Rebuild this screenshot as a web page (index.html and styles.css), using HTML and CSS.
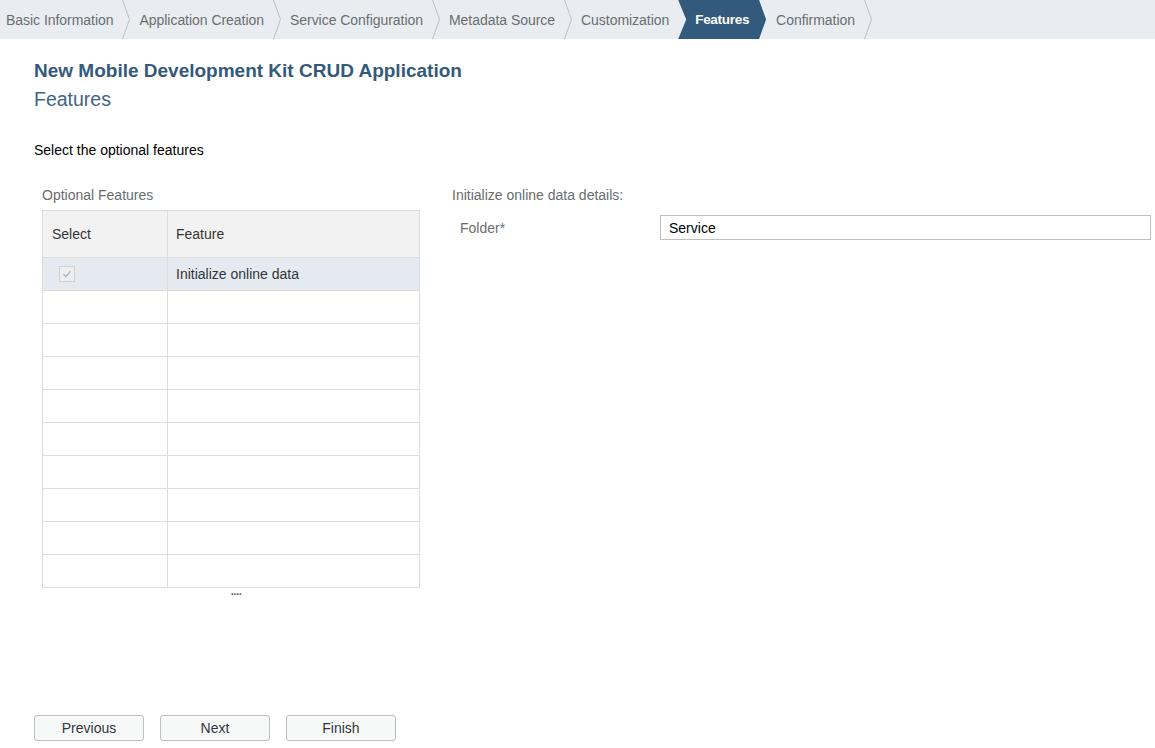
FILE: index.html
```html
<!DOCTYPE html>
<html lang="en">
<head>
<meta charset="utf-8">
<title>New Mobile Development Kit CRUD Application</title>
<link rel="stylesheet" href="styles.css">
</head>
<body>
<nav class="steps">
  <div class="step step-first">Basic Information</div>
  <svg class="sep" width="8" height="39" viewBox="0 0 8 39"><polyline points="0.5,0 7.5,19.5 0.5,39" fill="none" stroke="#bdbfc2" stroke-width="1"/></svg>
  <div class="step">Application Creation</div>
  <svg class="sep" width="8" height="39" viewBox="0 0 8 39"><polyline points="0.5,0 7.5,19.5 0.5,39" fill="none" stroke="#bdbfc2" stroke-width="1"/></svg>
  <div class="step">Service Configuration</div>
  <svg class="sep" width="8" height="39" viewBox="0 0 8 39"><polyline points="0.5,0 7.5,19.5 0.5,39" fill="none" stroke="#bdbfc2" stroke-width="1"/></svg>
  <div class="step">Metadata Source</div>
  <svg class="sep" width="8" height="39" viewBox="0 0 8 39"><polyline points="0.5,0 7.5,19.5 0.5,39" fill="none" stroke="#bdbfc2" stroke-width="1"/></svg>
  <div class="step">Customization</div>
  <div class="step step-active">Features</div>
  <div class="step step-after">Confirmation</div>
  <svg class="sep" width="8" height="39" viewBox="0 0 8 39"><polyline points="0.5,0 7.5,19.5 0.5,39" fill="none" stroke="#bdbfc2" stroke-width="1"/></svg>
</nav>

<main class="content">
  <h1 class="title">New Mobile Development Kit CRUD Application</h1>
  <h2 class="subtitle">Features</h2>
  <p class="intro">Select the optional features</p>

  <div class="columns">
    <section class="left">
      <div class="label">Optional Features</div>
      <table class="grid">
        <thead>
          <tr><th class="c-select">Select</th><th>Feature</th></tr>
        </thead>
        <tbody>
          <tr class="selected">
            <td class="c-select"><span class="checkbox"><svg width="10" height="10" viewBox="0 0 10 10"><polyline points="1.5,5.2 4,7.6 8.6,2.2" fill="none" stroke="#9fb1c4" stroke-width="1.2"/></svg></span></td>
            <td>Initialize online data</td>
          </tr>
          <tr><td class="c-select"></td><td></td></tr>
          <tr><td class="c-select"></td><td></td></tr>
          <tr><td class="c-select"></td><td></td></tr>
          <tr><td class="c-select"></td><td></td></tr>
          <tr><td class="c-select"></td><td></td></tr>
          <tr><td class="c-select"></td><td></td></tr>
          <tr><td class="c-select"></td><td></td></tr>
          <tr><td class="c-select"></td><td></td></tr>
          <tr><td class="c-select"></td><td></td></tr>
        </tbody>
      </table>
      <div class="more">....</div>
    </section>

    <section class="right">
      <div class="label">Initialize online data details:</div>
      <div class="field">
        <label class="field-label" for="folder">Folder*</label>
        <input id="folder" class="input" type="text" value="Service">
      </div>
    </section>
  </div>
</main>

<footer class="actions">
  <button class="btn">Previous</button>
  <button class="btn">Next</button>
  <button class="btn">Finish</button>
</footer>
</body>
</html>
```

FILE: styles.css
```css
html, body {
  margin: 0;
  padding: 0;
}
body {
  width: 1155px;
  height: 748px;
  background: #ffffff;
  font-family: "Liberation Sans", Arial, sans-serif;
  color: #32363a;
  position: relative;
  overflow: hidden;
}

/* Step bar */
.steps {
  display: flex;
  align-items: stretch;
  height: 39px;
  background: #e9edf1;
}
.step {
  display: flex;
  align-items: center;
  padding: 0 9px;
  font-size: 14px;
  letter-spacing: -0.04px;
  color: #6a6d70;
  white-space: nowrap;
}
.step-first {
  padding-left: 6px;
}
.sep {
  display: block;
  flex: none;
}
.step-active {
  background: #325a7c;
  color: #ffffff;
  font-weight: bold;
  font-size: 13.5px;
  letter-spacing: -0.3px;
  padding: 0 17px 0 17px;
  clip-path: polygon(0 0, calc(100% - 7px) 0, 100% 50%, calc(100% - 7px) 100%, 0 100%, 8px 50%);
}
.step-after {
  padding-left: 10px;
}

/* Content */
.content {
  padding: 0 4px 0 34px;
}
.title {
  margin: 0;
  padding-top: 21px;
  font-size: 19px;
  line-height: 22px;
  font-weight: bold;
  color: #34597b;
}
.subtitle {
  margin: 0;
  padding-top: 6px;
  font-size: 19.5px;
  line-height: 22px;
  font-weight: normal;
  color: #3e6486;
}
.intro {
  margin: 0;
  padding-top: 32px;
  font-size: 14px;
  line-height: 16px;
  color: #000000;
}
.columns {
  display: flex;
  gap: 32px;
  padding-top: 29px;
  padding-left: 8px;
}
.left {
  width: 378px;
  flex: none;
}
.right {
  flex: 1;
}
.label {
  font-size: 14px;
  line-height: 16px;
  color: #6a6d70;
  margin-bottom: 7px;
}

/* Table */
.grid {
  border-collapse: collapse;
  width: 378px;
  table-layout: fixed;
  font-size: 14px;
  color: #32363a;
}
.grid th,
.grid td {
  border: 1px solid #dddddd;
  text-align: left;
  padding: 0 0 0 8px;
}
.grid th {
  background: #f2f2f2;
  font-weight: normal;
  height: 46px;
  color: #32363a;
}
.grid td {
  height: 32px;
  background: #ffffff;
}
.grid .c-select {
  width: 115px;
}
.grid th.c-select {
  padding-left: 9px;
}
.grid tr.selected td {
  background: #e5eaf0;
}
.grid td.c-select {
  padding-left: 16px;
}
.checkbox {
  display: flex;
  align-items: center;
  justify-content: center;
  width: 14px;
  height: 14px;
  border: 1px solid #cdcfd2;
  background: #eeeeee;
}
.more {
  text-align: center;
  padding-left: 10px;
  font-size: 11px;
  font-weight: bold;
  letter-spacing: -0.4px;
  line-height: 6px;
  color: #555555;
}

/* Right form */
.field {
  display: flex;
  align-items: center;
  padding-top: 5px;
}
.field-label {
  width: 200px;
  flex: none;
  padding-left: 8px;
  font-size: 14px;
  color: #6a6d70;
}
.input {
  flex: 1;
  height: 25px;
  box-sizing: border-box;
  border: 1px solid #bfbfbf;
  border-radius: 0;
  padding: 0 8px;
  font-family: "Liberation Sans", Arial, sans-serif;
  font-size: 14px;
  color: #000000;
  background: #ffffff;
  margin: 0;
}

/* Footer */
.actions {
  position: absolute;
  left: 34px;
  bottom: 7px;
  display: flex;
  gap: 16px;
}
.btn {
  width: 110px;
  height: 26px;
  border: 1px solid #bfbfbf;
  border-radius: 3px;
  background: #f7f9f9;
  font-family: "Liberation Sans", Arial, sans-serif;
  font-size: 14px;
  color: #32363a;
  padding: 0;
}
```
